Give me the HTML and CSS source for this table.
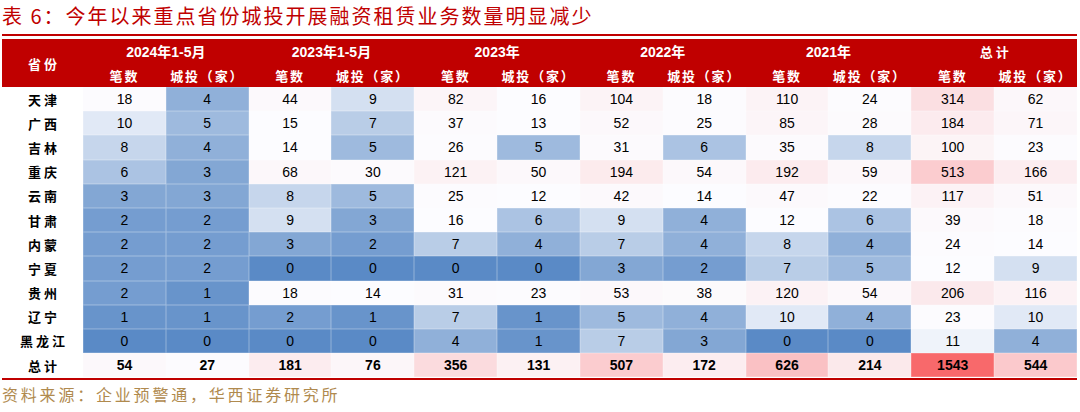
FILE: index.html
```html
<!DOCTYPE html>
<html lang="zh-CN">
<head>
<meta charset="utf-8">
<title>表6</title>
<link rel="stylesheet" href="styles.css">
</head>
<body>
<div class="page">
  <h1 class="title">表 6：今年以来重点省份城投开展融资租赁业务数量明显减少</h1>
  <div class="rule"></div>
  <table class="tbl">
    <colgroup><col class="c-prov"><col span="12"></colgroup>
    <thead>
      <tr class="hrow">
        <th rowspan="2" class="prov-h">省份</th>
        <th colspan="2">2024年1-5月</th>
        <th colspan="2">2023年1-5月</th>
        <th colspan="2">2023年</th>
        <th colspan="2">2022年</th>
        <th colspan="2">2021年</th>
        <th colspan="2" class="cjk-h">总计</th>
      </tr>
      <tr class="hrow sub">
        <th>笔数</th><th>城投（家）</th>
        <th>笔数</th><th>城投（家）</th>
        <th>笔数</th><th>城投（家）</th>
        <th>笔数</th><th>城投（家）</th>
        <th>笔数</th><th>城投（家）</th>
        <th>笔数</th><th>城投（家）</th>
      </tr>
    </thead>
    <tbody>
      <tr><th class="prov">天津</th><td class="v">18</td><td class="v">4</td><td class="v">44</td><td class="v">9</td><td class="v">82</td><td class="v">16</td><td class="v">104</td><td class="v">18</td><td class="v">110</td><td class="v">24</td><td class="v">314</td><td class="v">62</td></tr>
      <tr><th class="prov">广西</th><td class="v">10</td><td class="v">5</td><td class="v">15</td><td class="v">7</td><td class="v">37</td><td class="v">13</td><td class="v">52</td><td class="v">25</td><td class="v">85</td><td class="v">28</td><td class="v">184</td><td class="v">71</td></tr>
      <tr><th class="prov">吉林</th><td class="v">8</td><td class="v">4</td><td class="v">14</td><td class="v">5</td><td class="v">26</td><td class="v">5</td><td class="v">31</td><td class="v">6</td><td class="v">35</td><td class="v">8</td><td class="v">100</td><td class="v">23</td></tr>
      <tr><th class="prov">重庆</th><td class="v">6</td><td class="v">3</td><td class="v">68</td><td class="v">30</td><td class="v">121</td><td class="v">50</td><td class="v">194</td><td class="v">54</td><td class="v">192</td><td class="v">59</td><td class="v">513</td><td class="v">166</td></tr>
      <tr><th class="prov">云南</th><td class="v">3</td><td class="v">3</td><td class="v">8</td><td class="v">5</td><td class="v">25</td><td class="v">12</td><td class="v">42</td><td class="v">14</td><td class="v">47</td><td class="v">22</td><td class="v">117</td><td class="v">51</td></tr>
      <tr><th class="prov">甘肃</th><td class="v">2</td><td class="v">2</td><td class="v">9</td><td class="v">3</td><td class="v">16</td><td class="v">6</td><td class="v">9</td><td class="v">4</td><td class="v">12</td><td class="v">6</td><td class="v">39</td><td class="v">18</td></tr>
      <tr><th class="prov">内蒙</th><td class="v">2</td><td class="v">2</td><td class="v">3</td><td class="v">2</td><td class="v">7</td><td class="v">4</td><td class="v">7</td><td class="v">4</td><td class="v">8</td><td class="v">4</td><td class="v">24</td><td class="v">14</td></tr>
      <tr><th class="prov">宁夏</th><td class="v">2</td><td class="v">2</td><td class="v">0</td><td class="v">0</td><td class="v">0</td><td class="v">0</td><td class="v">3</td><td class="v">2</td><td class="v">7</td><td class="v">5</td><td class="v">12</td><td class="v">9</td></tr>
      <tr><th class="prov">贵州</th><td class="v">2</td><td class="v">1</td><td class="v">18</td><td class="v">14</td><td class="v">31</td><td class="v">23</td><td class="v">53</td><td class="v">38</td><td class="v">120</td><td class="v">54</td><td class="v">206</td><td class="v">116</td></tr>
      <tr><th class="prov">辽宁</th><td class="v">1</td><td class="v">1</td><td class="v">2</td><td class="v">1</td><td class="v">7</td><td class="v">1</td><td class="v">5</td><td class="v">4</td><td class="v">10</td><td class="v">4</td><td class="v">23</td><td class="v">10</td></tr>
      <tr><th class="prov">黑龙江</th><td class="v">0</td><td class="v">0</td><td class="v">0</td><td class="v">0</td><td class="v">4</td><td class="v">1</td><td class="v">7</td><td class="v">3</td><td class="v">0</td><td class="v">0</td><td class="v">11</td><td class="v">4</td></tr>
      <tr class="total"><th class="prov">总计</th><td class="v">54</td><td class="v">27</td><td class="v">181</td><td class="v">76</td><td class="v">356</td><td class="v">131</td><td class="v">507</td><td class="v">172</td><td class="v">626</td><td class="v">214</td><td class="v">1543</td><td class="v">544</td></tr>
    </tbody>
  </table>
  <div class="rule rule-bottom"></div>
  <p class="source">资料来源：企业预警通，华西证券研究所</p>
</div>
<script src="script.js"></script>
</body>
</html>
```

FILE: styles.css
```css
html, body {
  margin: 0;
  padding: 0;
  background: #ffffff;
}

.page {
  width: 1075px;
  padding-left: 2px;
}

.title {
  margin: 0;
  height: 34px;
  line-height: 32px;
  font-family: "Noto Sans CJK SC", sans-serif;
  font-weight: 400;
  font-size: 20px;
  letter-spacing: 2px;
  color: #c00000;
  white-space: nowrap;
}

.rule {
  height: 2px;
  background: #c00000;
  margin-bottom: 3px;
}

.rule-bottom {
  margin-top: 1px;
  margin-bottom: 0;
}

.tbl {
  width: 1075px;
  border-collapse: collapse;
  table-layout: fixed;
}

.c-prov {
  width: 81px;
}

.hrow th {
  background: #c00000;
  color: #ffffff;
  height: 24px;
  padding: 0;
  font-family: "Liberation Sans", "Noto Sans CJK SC", sans-serif;
  font-weight: 700;
  font-size: 14px;
  text-align: center;
  vertical-align: middle;
}

.hrow.sub th,
.hrow .prov-h,
.hrow .cjk-h {
  font-family: "Noto Sans CJK SC", sans-serif;
  font-size: 13px;
  letter-spacing: 1.8px;
}

.hrow .prov-h {
  letter-spacing: 3px;
  padding-left: 3px;
}

.hrow .cjk-h {
  letter-spacing: 3px;
  padding-left: 3px;
}

tbody th.prov {
  height: 24.2px;
  padding: 0 0 0 3px;
  font-family: "Noto Sans CJK SC", sans-serif;
  font-weight: 700;
  font-size: 13px;
  letter-spacing: 3px;
  color: #000000;
  text-align: center;
  vertical-align: middle;
  background: #ffffff;
}

tbody td.v {
  height: 24.2px;
  padding: 0;
  font-family: "Liberation Sans", Arial, sans-serif;
  font-size: 14px;
  color: #000000;
  text-align: center;
  vertical-align: middle;
  box-shadow: inset 0 0 0 0.5px rgba(255, 255, 255, 0.35);
}

.total td.v {
  font-weight: 700;
}

.source {
  margin: 3px 0 0;
  font-family: "Noto Sans CJK SC", sans-serif;
  font-size: 16px;
  letter-spacing: 2.8px;
  line-height: 22px;
  color: #b08a4e;
  white-space: nowrap;
}
```

FILE: script.js
```js
(function () {
  var cells = Array.prototype.slice.call(document.querySelectorAll('td.v'));
  var vals = cells.map(function (c) { return Number(c.textContent); });
  var sorted = vals.slice().sort(function (a, b) { return a - b; });
  var n = sorted.length;
  var rank = 0.5 * (n - 1);
  var lo = Math.floor(rank), hi = Math.ceil(rank);
  var mid = sorted[lo] + (sorted[hi] - sorted[lo]) * (rank - lo);
  var min = sorted[0], max = sorted[n - 1];
  var cMin = [90, 138, 198], cMid = [252, 252, 255], cMax = [248, 105, 107];
  function lerp(a, b, t) {
    return a.map(function (x, i) { return Math.round(x + (b[i] - x) * t); });
  }
  cells.forEach(function (c, i) {
    var v = vals[i], col;
    if (v <= mid) {
      col = lerp(cMin, cMid, mid === min ? 1 : (v - min) / (mid - min));
    } else {
      col = lerp(cMid, cMax, (v - mid) / (max - mid));
    }
    c.style.backgroundColor = 'rgb(' + col.join(',') + ')';
  });
})();
```
